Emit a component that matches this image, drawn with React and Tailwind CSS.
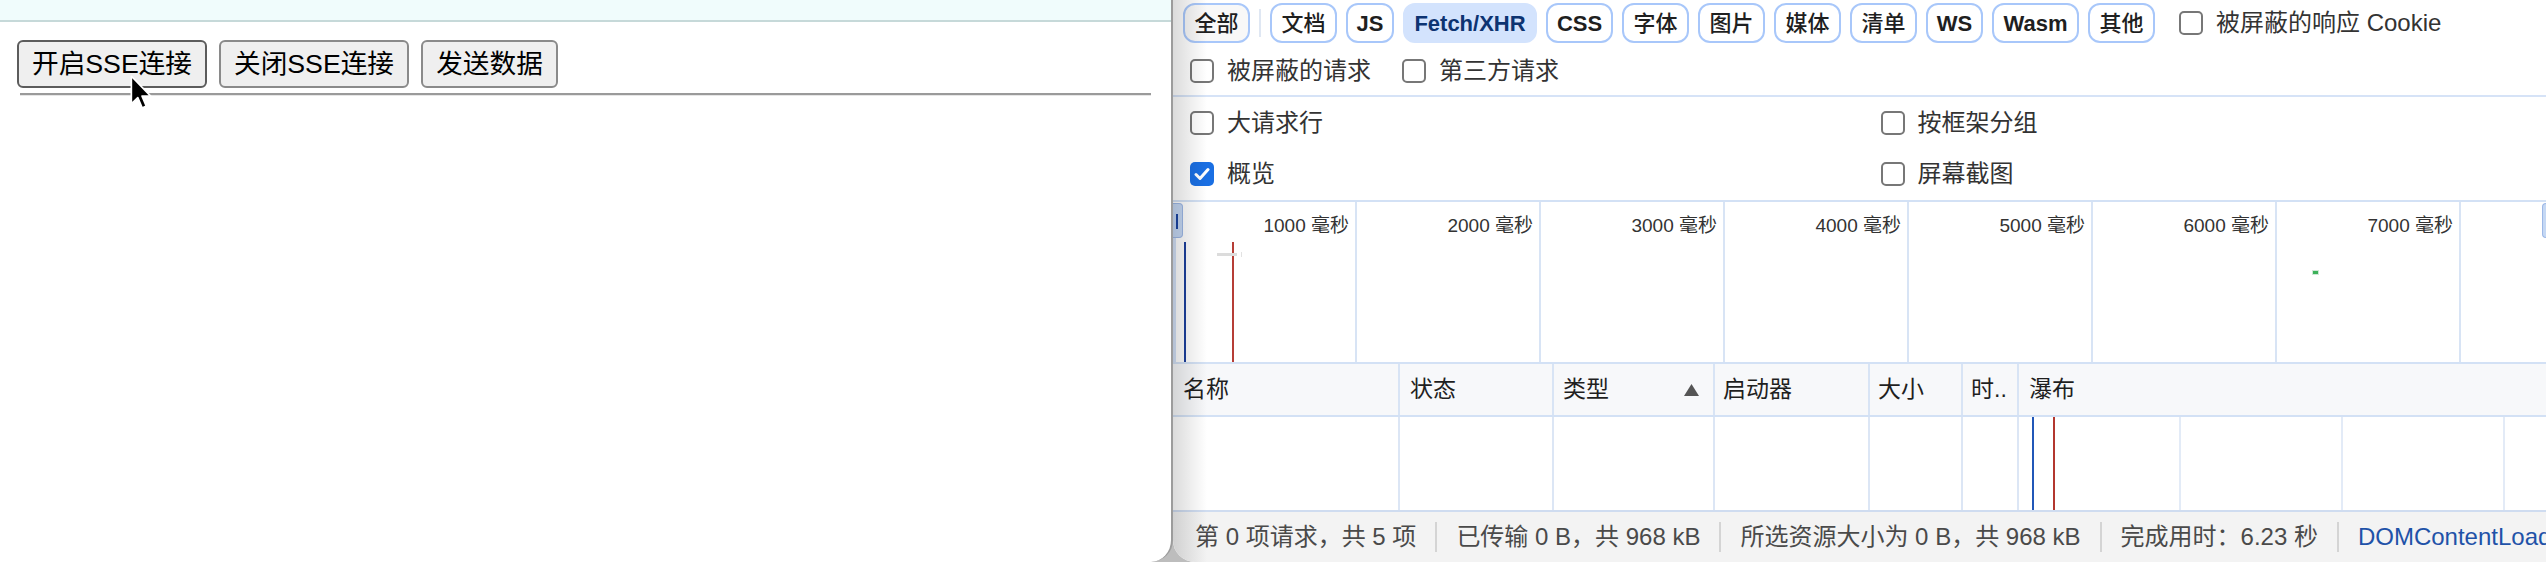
import React from "react";

const chips = [
  { label: "文档", w: "w-[67px]" },
  { label: "JS", w: "w-[48px]", latin: true },
  { label: "Fetch/XHR", w: "w-[134px]", active: true, latin: true },
  { label: "CSS", w: "w-[67px]", latin: true },
  { label: "字体", w: "w-[67px]" },
  { label: "图片", w: "w-[67px]" },
  { label: "媒体", w: "w-[67px]" },
  { label: "清单", w: "w-[67px]" },
  { label: "WS", w: "w-[57px]", latin: true },
  { label: "Wasm", w: "w-[87px]", latin: true },
  { label: "其他", w: "w-[67px]" },
];

const columns = [
  { label: "名称", w: "w-[227px]", pl: "pl-[10px]" },
  { label: "状态", w: "w-[154px]", pl: "pl-[10px]" },
  { label: "类型", w: "w-[161px]", pl: "pl-[9px]", sort: true },
  { label: "启动器", w: "w-[155px]", pl: "pl-[8px]" },
  { label: "大小", w: "w-[93px]", pl: "pl-[8px]" },
  { label: "时..", w: "w-[56px]", pl: "pl-[8px]" },
];

const ticks = ["1000", "2000", "3000", "4000", "5000", "6000", "7000"];

const footer = [
  "第 0 项请求，共 5 项",
  "已传输 0 B，共 968 kB",
  "所选资源大小为 0 B，共 968 kB",
  "完成用时：6.23 秒",
];

function Checkbox({ checked }) {
  if (checked) {
    return (
      <span className="flex h-[24px] w-[24px] shrink-0 items-center justify-center rounded-[5px] bg-[#1a6fe3]">
        <svg width="16" height="14" viewBox="0 0 16 14">
          <path d="M2 7.5 L6 11.5 L14 2.5" fill="none" stroke="white" strokeWidth="3" strokeLinecap="round" strokeLinejoin="round" />
        </svg>
      </span>
    );
  }
  return <span className="h-[24px] w-[24px] shrink-0 rounded-[5px] border-2 border-[#777] bg-white" />;
}

function Option({ label, checked }) {
  return (
    <label className="flex items-center gap-[13px] text-[24px] font-normal text-[#333]">
      <Checkbox checked={checked} />
      <span>{label}</span>
    </label>
  );
}

function Cursor() {
  return (
    <svg className="absolute left-[130px] top-[75px]" width="22" height="36" viewBox="0 0 17 28">
      <path
        d="M1 1 L1 22.5 L6 17.6 L9.4 25.6 L12.6 24.2 L9.3 16.4 L16 16.4 Z"
        fill="black"
        stroke="white"
        strokeWidth="1.3"
        strokeLinejoin="round"
      />
    </svg>
  );
}

function PageButton({ children, w, dark }) {
  return (
    <button
      className={`h-[48px] ${w} rounded-[6px] border-2 ${dark ? "border-[#5c5c5c]" : "border-[#8a8a8a]"} bg-[#efefef] text-[26.67px] leading-none text-black`}
    >
      {children}
    </button>
  );
}

function Page() {
  return (
    <div className="relative h-full w-[1173px] shrink-0 rounded-br-[22px] border-r-2 border-[#9c9c9c] bg-white">
      <div className="h-[22px] border-b-2 border-[#c6d9d9] bg-[#f0fcfc]" />
      <div className="flex gap-[12px] pl-[17px] pt-[18px]">
        <PageButton w="w-[190px]" dark>
          开启SSE连接
        </PageButton>
        <PageButton w="w-[190px]">关闭SSE连接</PageButton>
        <PageButton w="w-[137px]">发送数据</PageButton>
      </div>
      <div className="ml-[20px] mr-[20px] mt-[5px] border-t-2 border-b border-t-[#9a9a9a] border-b-[#e6e6e6]" />
      <Cursor />
    </div>
  );
}

function Overview() {
  return (
    <div className="relative flex h-[164px] border-y-2 border-[#d3e1f5]">
      {ticks.map((t) => (
        <div key={t} className="h-full w-[184px] shrink-0 border-r-2 border-[#d8e4f5] pr-[6px] pt-[10px] text-right text-[19px] text-[#333]">
          {t} 毫秒
        </div>
      ))}
      <div className="h-full flex-1" />

      {/* window handles and markers */}
      <div className="absolute left-0 top-[1px] h-[35px] w-[10px] rounded-r-[4px] border border-l-0 border-[#9db8e6] bg-[#c5d8f4]">
        <div className="ml-[3px] mt-[10px] h-[15px] w-[2px] bg-[#1b45a3]" />
      </div>
      <div className="absolute bottom-0 left-0 top-[36px] w-[3px] bg-[#d3e1f7]" />
      <div className="absolute bottom-0 left-[11px] top-[40px] w-[2px] bg-[#1c3f9b]" />
      <div className="absolute bottom-0 left-[59px] top-[40px] w-[2px] bg-[#b63d36]" />
      <div className="absolute left-[44px] top-[51px] h-[3px] w-[20px] bg-[#dcdcdc]" />
      <div className="absolute left-[68px] top-[50px] h-[5px] w-[1px] bg-[#e2e2e2]" />
      <div className="absolute left-[1139px] top-[68px] h-[5px] w-[7px] border border-[#cfe8d6] bg-[#3cb15a]" />
      <div className="absolute right-[-6px] top-[1px] h-[35px] w-[10px] rounded-l-[4px] border border-r-0 border-[#9db8e6] bg-[#c5d8f4]" />
    </div>
  );
}

function Table() {
  return (
    <>
      <div className="flex h-[53px] border-b-2 border-[#d3e1f5] bg-[#f7f8fa] text-[23px] text-[#1f1f1f]">
        {columns.map((c) => (
          <div key={c.label} className={`flex h-full ${c.w} shrink-0 items-center justify-between border-r-2 border-[#d8e4f5] ${c.pl} pr-[14px]`}>
            <span>{c.label}</span>
            {c.sort && (
              <svg width="15" height="12" viewBox="0 0 15 12">
                <path d="M7.5 0 L15 12 L0 12 Z" fill="#555" />
              </svg>
            )}
          </div>
        ))}
        <div className="flex h-full flex-1 items-center pl-[10px]">瀑布</div>
      </div>
      <div className="flex h-[93px] bg-white">
        {columns.map((c) => (
          <div key={c.label} className={`h-full ${c.w} shrink-0 border-r-2 border-[#dce6f5]`} />
        ))}
        <div className="relative flex h-full flex-1">
          <div className="h-full w-[162px] shrink-0 border-r-2 border-[#e3ebf7]" />
          <div className="h-full w-[162px] shrink-0 border-r-2 border-[#e3ebf7]" />
          <div className="h-full w-[162px] shrink-0 border-r-2 border-[#e3ebf7]" />
          <div className="absolute bottom-0 left-[13px] top-0 w-[2px] bg-[#2157b8]" />
          <div className="absolute bottom-0 left-[34px] top-0 w-[2px] bg-[#b3372f]" />
        </div>
      </div>
    </>
  );
}

function DevTools() {
  return (
    <div className="relative flex h-full flex-1 flex-col overflow-hidden rounded-bl-[22px] bg-white">
      <div className="flex h-[46px] items-center gap-[9px] pl-[10px] text-[22px] text-[#1f1f1f]">
        <span className="flex h-[40px] w-[67px] items-center justify-center rounded-[12px] border-2 border-[#a8c7fa] bg-[#f8f8f8] font-medium">
          全部
        </span>
        <span className="h-[28px] w-[2px] bg-[#dfe7f3]" />
        {chips.map((c) => (
          <span
            key={c.label}
            className={`flex h-[40px] ${c.w} items-center justify-center rounded-[12px] border-2 ${c.latin ? "font-semibold" : "font-medium"} ${
              c.active ? "border-[#d3e3fd] bg-[#d3e3fd] text-[#0d3472]" : "border-[#a8c7fa] bg-white"
            }`}
          >
            {c.label}
          </span>
        ))}
        <span className="ml-[15px]">
          <Option label="被屏蔽的响应 Cookie" />
        </span>
      </div>
      <div className="flex h-[51px] items-center gap-[31px] border-b-2 border-[#d6e3f7] pl-[17px]">
        <Option label="被屏蔽的请求" />
        <Option label="第三方请求" />
      </div>
      <div className="grid h-[51px] grid-cols-2 items-center">
        <div className="pl-[17px]">
          <Option label="大请求行" />
        </div>
        <div className="pl-[21px]">
          <Option label="按框架分组" />
        </div>
      </div>
      <div className="grid h-[52px] grid-cols-2 items-center">
        <div className="pl-[17px]">
          <Option label="概览" checked />
        </div>
        <div className="pl-[21px]">
          <Option label="屏幕截图" />
        </div>
      </div>
      <Overview />
      <Table />
      <div className="flex h-[52px] items-center border-t-2 border-[#cfdcf0] bg-[#f3f3f3] text-[24px] text-[#4a4a4a]">
        {footer.map((f, i) => (
          <span key={f} className={`whitespace-nowrap ${i === 0 ? "pl-[22px]" : "border-l-2 border-[#d4d4d4] pl-[19px]"} pr-[19px] leading-[30px]`}>
            {f}
          </span>
        ))}
        <span className="min-w-0 flex-1 overflow-hidden whitespace-nowrap border-l-2 border-[#d4d4d4] pl-[19px] leading-[30px] text-[#1f52a8]">
          DOMContentLoaded：1.01 秒
        </span>
      </div>

      {/* window shadow along the left edge */}
      <div className="pointer-events-none absolute bottom-0 left-0 top-0 w-[34px] bg-linear-to-r from-[#00000024] to-transparent" />
    </div>
  );
}

export default function App() {
  return (
    <div className="flex h-[562px] w-[2546px] overflow-hidden bg-[#bdbdbd] [font-family:'Liberation_Sans','Noto_Sans_CJK_SC',sans-serif]">
      <Page />
      <DevTools />
    </div>
  );
}
